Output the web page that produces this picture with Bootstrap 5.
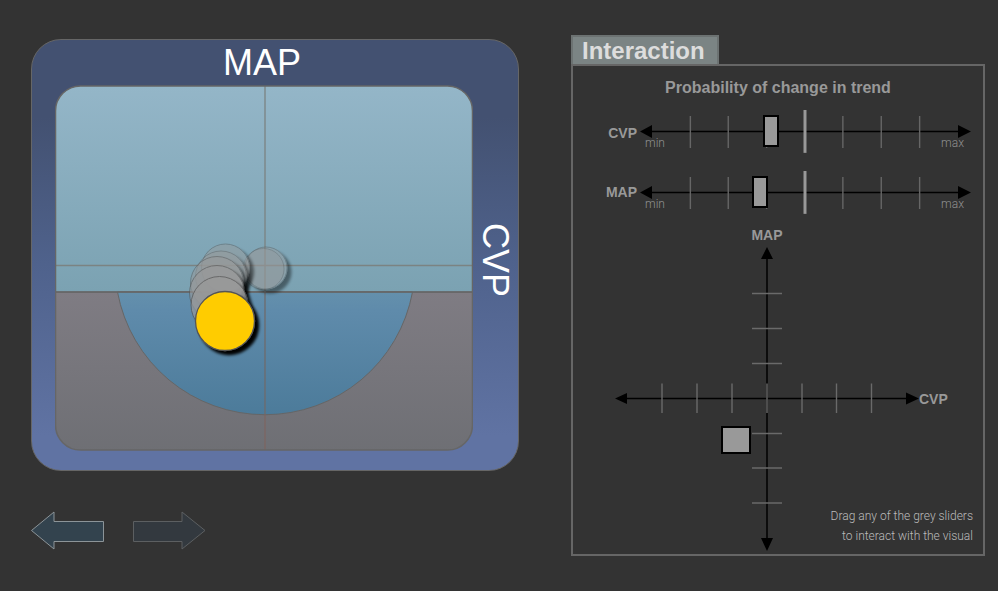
<!DOCTYPE html>
<html lang="en">
<head>
<meta charset="utf-8">
<meta name="viewport" content="width=device-width, initial-scale=1">
<title>MAP / CVP Interaction</title>
<link href="https://cdn.jsdelivr.net/npm/bootstrap@5.3.0/dist/css/bootstrap.min.css" rel="stylesheet">
<style>
  body { background: #333; color: #999; font-family: "Liberation Sans", Arial, sans-serif; }
  .stage { display: grid; grid-template-columns: 488fr 414fr; column-gap: 52px; padding: 35px 13px 32px 31px; }
  svg { display: block; width: 100%; height: auto; }

  .monitor { display: grid; grid-template-columns: 1fr 45px; padding: 0 0 19px 23px; border: 1px solid #666; border-radius: 30px;
    background: linear-gradient(#435171 0%, #435171 18%, #4f628c 52%, #6073a3 92%); }
  .monitor-label { font-size: 36px; line-height: 45px; color: #fff; }
  .monitor-top { padding-right: 4px; }
  .monitor-side { writing-mode: vertical-rl; padding-bottom: 16px; }
  .nav-arrow { width: 74px; }

  .tab-title { font-size: 24px; line-height: 27px; padding: 0 12px 0 9px; color: #ddd; background: #7b8484; border: 2px solid #6c7272; border-bottom: 0; }
  .panel { border: 2px solid #666; padding-bottom: 3px; }
  .panel-title { font-size: 16px; line-height: 20px; padding-top: 12px; margin-bottom: 11px; }
  .axis-label { font-size: 14px; line-height: 16px; font-weight: 700; }
  .slider-row { display: grid; grid-template-columns: 64px 1fr; column-gap: 3px; padding-right: 12px; margin-bottom: 17px; }
  .slider-row + .slider-row { margin-bottom: 13px; }
  .layers { display: grid; }
  .layers > * { grid-area: 1 / 1; }
  .end-label { font-family: "Liberation Sans Narrow", Roboto, sans-serif; font-weight: 300; font-size: 12px; line-height: 16px; padding: 0 7px 2px 5px; color: #909090; }

  .trend { appearance: none; width: 100%; height: 100%; margin: 0; background: transparent; }
  .trend::-webkit-slider-thumb { appearance: none; width: 16px; height: 32px; background: #999; border: 2px solid #000; border-radius: 0; cursor: grab; }
  .trend::-moz-range-thumb { width: 12px; height: 28px; background: #999; border: 2px solid #000; border-radius: 0; }

  .pad-grid { display: grid; grid-template-columns: 42fr 304fr 64fr; }
  .pad-handle { left: 35%; top: 59%; width: 30px; height: 28px; padding: 0; background: #999; border: 2px solid #000; cursor: grab; }
  .hint { font-family: "Liberation Sans Narrow", Roboto, sans-serif; font-weight: 300; font-size: 12px; line-height: 20px; color: #bbb; padding: 0 10px 5px 0; }
</style>
<script src="https://cdn.jsdelivr.net/npm/bootstrap@5.3.0/dist/js/bootstrap.bundle.min.js"></script>
</head>
<body>
<main class="stage">
  <section class="pt-1">
    <div class="monitor">
      <div class="monitor-label monitor-top text-center">MAP</div>
      <div></div>
      <svg viewBox="0 0 418 366" role="img" aria-label="Ball position by MAP and CVP">
        <defs>
          <linearGradient id="sky" x1="0" y1="0" x2="0" y2="1"><stop offset="0" stop-color="#94b6c8"/><stop offset="1" stop-color="#7ba2b2"/></linearGradient>
          <linearGradient id="ground" x1="0" y1="0" x2="0" y2="1"><stop offset="0" stop-color="#7f7c83"/><stop offset="1" stop-color="#6e6f74"/></linearGradient>
          <linearGradient id="bowl" x1="0" y1="0" x2="0" y2="1"><stop offset="0" stop-color="#6490ac"/><stop offset=".15" stop-color="#5f8bab"/><stop offset="1" stop-color="#4c7b9a"/></linearGradient>
          <clipPath id="screen"><rect x=".5" y="1" width="417" height="364" rx="25"/></clipPath>
          <filter id="shade" x="-30%" y="-30%" width="170%" height="170%"><feDropShadow dx="4" dy="4" stdDeviation="1.8" flood-color="#000"/></filter>
        </defs>
        <g clip-path="url(#screen)" stroke="#666">
          <rect width="418" height="207" fill="url(#sky)" stroke="none"/>
          <rect x="-2" y="207" width="422" height="162" fill="url(#ground)"/>
          <path d="M62.5 207A150 150 0 0 0 357.5 207Z" fill="url(#bowl)"/>
          <path d="M0 207H418" stroke-width="1.4"/>
          <path d="M0 180.5H418M210 0V207" stroke="#7b8382" stroke-width="1.3"/>
          <path d="M210 207V329" stroke="#6e6b6c" stroke-width="1.3"/>
          <path d="M210 329V366" stroke="#80635d"/>
        </g>
        <rect x=".5" y="1" width="417" height="364" rx="25" fill="none" stroke="#666" stroke-width="1.5"/>
        <g fill="#999" stroke="#555">
          <g filter="url(#shade)" opacity=".42"><circle cx="211" cy="183" r="21"/></g>
          <circle cx="208.500" cy="184" r="20.500" opacity=".3"/>
          <g filter="url(#shade)" opacity=".45"><circle cx="170.500" cy="183" r="24"/></g>
          <g filter="url(#shade)" opacity=".4"><circle cx="166" cy="191.500" r="25.500"/></g>
          <g filter="url(#shade)" opacity=".5"><circle cx="162" cy="198" r="26.500"/></g>
          <g filter="url(#shade)" opacity=".6"><circle cx="162" cy="208" r="27.500"/></g>
          <g filter="url(#shade)" opacity=".7"><circle cx="164.500" cy="220" r="28.500"/></g>
          <circle cx="170" cy="236" r="29.500" fill="#fc0" stroke-width="1.3" filter="url(#shade)"/>
        </g>
      </svg>
      <div class="monitor-label monitor-side text-center">CVP</div>
    </div>
    <div class="d-flex mt-4 pt-3">
      <button type="button" class="nav-arrow border-0 bg-transparent p-0 me-4" aria-label="Previous">
        <svg viewBox="0 0 74 40"><path d="M.5 19.500L23 1V10.500H72.500V30.500H23V38Z" fill="#33434e" stroke="#8c9498"/></svg>
      </button>
      <button type="button" class="nav-arrow border-0 bg-transparent p-0 ms-1" aria-label="Next">
        <svg viewBox="0 0 74 40"><path d="M72 19.500L49 1V10.500H.5V30.500H49V38Z" fill="#33393f" stroke="#5c5f61"/></svg>
      </button>
    </div>
  </section>

  <section>
    <h1 class="tab-title d-inline-block fw-bold m-0 align-top">Interaction</h1>
    <div class="panel">
      <h2 class="panel-title fw-bold text-center">Probability of change in trend</h2>

      <div class="slider-row">
        <label class="axis-label text-end align-self-center pt-1" for="cvp">CVP</label>
        <div class="layers">
          <svg viewBox="0 0 332 44" aria-hidden="true">
            <path d="M10 22.500H322" stroke="#000" stroke-width="1.6"/><path d="M0 22.500L12 16V29ZM332 22.500L319 16V29Z"/>
            <path d="M50.500 7V39M88.500 7V39M127 7V39M203.500 7V39M242 7V39M280.500 7V39" stroke="#666" stroke-width="1.4"/>
            <path d="M165.500 1V44" stroke="#999" stroke-width="3"/>
          </svg>
          <div class="end-label d-flex justify-content-between align-self-end"><span>min</span><span>max</span></div>
          <input class="trend" id="cvp" type="range" min="0" max="1000" value="389">
        </div>
      </div>

      <div class="slider-row">
        <label class="axis-label text-end align-self-center" for="map">MAP</label>
        <div class="layers">
          <svg viewBox="0 0 332 44" aria-hidden="true">
            <path d="M10 22.500H322" stroke="#000" stroke-width="1.6"/><path d="M0 22.500L12 16V29ZM332 22.500L319 16V29Z"/>
            <path d="M50.500 7V39M88.500 7V39M127 7V39M203.500 7V39M242 7V39M280.500 7V39" stroke="#666" stroke-width="1.4"/>
            <path d="M165.500 1V44" stroke="#999" stroke-width="3"/>
          </svg>
          <div class="end-label d-flex justify-content-between align-self-end"><span>min</span><span>max</span></div>
          <input class="trend" id="map" type="range" min="0" max="1000" value="354">
        </div>
      </div>

      <div class="layers">
        <div class="pad-grid">
          <span></span><span class="axis-label text-center pb-1">MAP</span><span></span>
          <span></span>
          <div class="position-relative">
            <svg viewBox="0 0 304 304" aria-hidden="true">
              <path d="M10 151.500H294M152 10V294" stroke="#000" stroke-width="1.5"/>
              <path d="M0 151.500L12 146V157ZM304 151.500L291 145.500V157.500ZM152 0L146 12H158ZM152 304L146 291H158Z"/>
              <path d="M47 136.500V166M82 136.500V166M117 136.500V166M152 136.500V166M187 136.500V166M221.500 136.500V166M256.500 136.500V166M137 46.500H167M137 81.500H167M137 116.500H167M137 186.500H167M137 221H167M137 256H167" stroke="#6a6a6a" stroke-width="1.4"/>
            </svg>
            <button type="button" class="pad-handle position-absolute" aria-label="Drag MAP and CVP"></button>
          </div>
          <span class="axis-label align-self-center">CVP</span>
        </div>
        <p class="hint text-end align-self-end m-0">Drag any of the grey sliders<br>to interact with the visual</p>
      </div>
    </div>
  </section>
</main>
</body>
</html>
